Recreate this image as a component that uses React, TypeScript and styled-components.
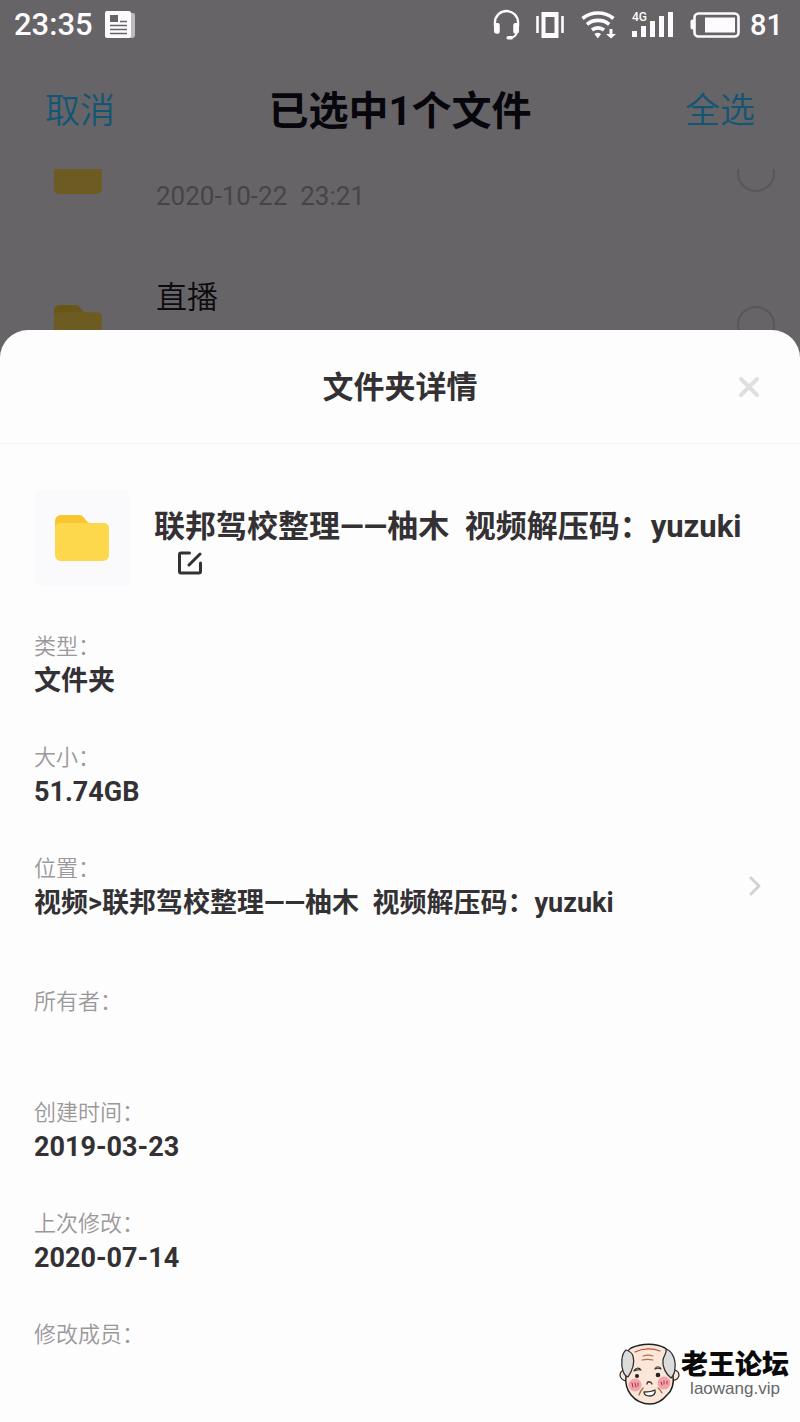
import React from "react";
import styled, { createGlobalStyle } from "styled-components";

const GlobalStyle = createGlobalStyle`
  *, *::before, *::after { box-sizing: border-box; }
  body {
    margin: 0;
    background: #676467;
    font-family: Roboto, "Noto Sans CJK SC", sans-serif;
  }
  h1, h2, h3, p, ul, dl, dd { margin: 0; padding: 0; }
  ul { list-style: none; }
  button { margin: 0; padding: 0; border: 0; background: none; font: inherit; color: inherit; cursor: pointer; }
  svg { display: block; flex: none; }
`;

const Page = styled.div`
  position: relative;
  display: flex;
  flex-direction: column;
  min-height: 100vh;
`;

const StatusBar = styled.div`
  display: flex;
  align-items: center;
  justify-content: space-between;
  height: 50px;
  padding: 0 17px 0 14px;
  color: #fdfbfd;
`;

const StatusGroup = styled.div<{ $gap: number }>`
  display: flex;
  align-items: center;
  gap: ${(p) => p.$gap}px;
`;

const StatusText = styled.span`
  font-size: 31px;
  font-weight: 500;
  line-height: 50px;
`;

const Battery = styled.div`
  display: flex;
  align-items: center;
  gap: 10px;
  font-size: 29px;
  font-weight: 500;
  line-height: 50px;
`;

const NavBar = styled.header`
  display: flex;
  align-items: center;
  justify-content: space-between;
  height: 119px;
  padding: 4px 45px 0;
`;

const NavTitle = styled.h1`
  font-size: 40px;
  font-weight: 700;
  line-height: 50px;
  color: #07060c;
`;

const NavButton = styled.button`
  font-size: 35px;
  font-weight: 350;
  line-height: 50px;
  color: #135674;
`;

const FileList = styled.ul`
  height: 161px;
  overflow: hidden;
`;

const FileRow = styled.li`
  display: flex;
  align-items: center;
  gap: 54px;
  height: 152px;
  padding: 0 25px 0 54px;

  &:first-child { margin-top: -72px; }
`;

const FileText = styled.label`
  flex: 1;
  padding-bottom: 4px;
`;

const FileName = styled.div`
  min-height: 50px;
  font-size: 31px;
  line-height: 50px;
  font-weight: 350;
  color: #0c0b0e;
`;

const FileDate = styled.div`
  min-height: 50px;
  font-size: 26px;
  line-height: 50px;
  white-space: pre-wrap;
  color: #464447;
`;

const RoundCheck = styled.input`
  appearance: none;
  width: 38px;
  height: 38px;
  margin: 0;
  border: 2px solid #595659;
  border-radius: 50%;
`;

const Sheet = styled.section`
  flex: 1;
  border-radius: 28px 28px 0 0;
  background: #fefdfe;
  color: #333133;
`;

const SheetHeader = styled.header`
  display: grid;
  grid-template-columns: 1fr auto 1fr;
  align-items: center;
  height: 114px;
  padding: 0 40px;
  border-bottom: 1px solid #f4f3f4;
`;

const SheetTitle = styled.h2`
  grid-column: 2;
  padding-top: 2px;
  font-size: 31px;
  font-weight: 700;
  line-height: 40px;
`;

const CloseButton = styled.button`
  justify-self: end;
`;

const SheetBody = styled.div`
  padding: 46px 34px 34px;
`;

const Summary = styled.div`
  display: flex;
  gap: 24px;
`;

const Thumb = styled.div`
  display: flex;
  align-items: center;
  justify-content: center;
  flex: none;
  width: 96px;
  height: 96px;
  border-radius: 8px;
  background: #faf9fb;
`;

const SummaryText = styled.div`
  padding-top: 18px;
`;

const FolderName = styled.h3`
  font-size: 31px;
  font-weight: 700;
  line-height: 37px;
  white-space: pre-wrap;
`;

const EditButton = styled.button`
  margin: 6px 0 0 24px;
`;

const Details = styled.dl`
  display: flex;
  flex-direction: column;
  gap: 43px;
  padding-top: 44px;
`;

const Detail = styled.div<{ $roomy?: boolean }>`
  display: flex;
  align-items: center;
  justify-content: space-between;
  padding-right: 4px;
  margin-bottom: ${(p) => (p.$roomy ? 22 : 0)}px;
`;

const Label = styled.dt`
  font-size: 22px;
  font-weight: 350;
  line-height: 34px;
  color: #9a989a;
`;

const Value = styled.dd`
  min-height: 34px;
  font-size: 27px;
  font-weight: 700;
  line-height: 34px;
  white-space: pre-wrap;
`;

const Watermark = styled.div`
  position: absolute;
  right: 11px;
  bottom: 17px;
  display: flex;
  align-items: center;
  gap: 1px;
  text-align: center;
`;

const WatermarkText = styled.div`
  padding-top: 2px;
`;

const WatermarkName = styled.div`
  font-size: 27px;
  font-weight: 900;
  line-height: 28px;
  color: #0a0a0a;
`;

const WatermarkSite = styled.div`
  font-family: "Liberation Sans", sans-serif;
  font-size: 17px;
  line-height: 20px;
  color: #666;
`;

const NewsIcon = () => (
  <svg width="30" height="28" viewBox="0 0 30 28" aria-hidden="true">
    <path d="M26 2h2a2 2 0 0 1 2 2v20a3 3 0 0 1-3 3h-2z" fill="#bcbabc" />
    <rect x="0" y="0" width="26" height="27" rx="2" fill="#fdfbfd" />
    <rect x="5" y="4" width="8" height="7" fill="#676467" />
    <path d="M15 10.500h7M5 14.500h17M5 18.500h17M5 22.500h17" stroke="#676467" strokeWidth="1.400" />
  </svg>
);

const HeadsetIcon = () => (
  <svg width="27" height="32" viewBox="0 0 28 32" fill="none" aria-hidden="true">
    <path d="M2 17v-3.500a12 12 0 0 1 24 0V17" stroke="#fdfbfd" strokeWidth="2.400" />
    <path d="M1 14h4a2 2 0 0 1 2 2v7a2 2 0 0 1-2 2H3.500A2.500 2.500 0 0 1 1 22.500zM27 14h-4a2 2 0 0 0-2 2v7a2 2 0 0 0 2 2h1.500a2.500 2.500 0 0 0 2.500-2.500z" fill="#fdfbfd" />
    <path d="M24.500 24c-.5 3-3 4.800-6 5" stroke="#fdfbfd" strokeWidth="2" />
    <rect x="14" y="27.500" width="7" height="3.500" rx="1.700" fill="#fdfbfd" />
  </svg>
);

const VibrateIcon = () => (
  <svg width="28" height="28" viewBox="0 0 28 28" aria-hidden="true">
    <path d="M1.500 5v17M26.500 5v17" stroke="#fdfbfd" strokeWidth="2.600" />
    <path d="M5.500 1h17v26h-17zM9.500 6v16h9V6z" fill="#fdfbfd" fillRule="evenodd" />
  </svg>
);

const WifiIcon = () => (
  <svg width="36" height="28" viewBox="0 0 36 28" fill="none" aria-hidden="true">
    <path d="M2.500 7.500c9-7.300 22-7.300 31 0M7 13.300c6.200-5.200 16-5.200 22.200 0M12 19c3.400-2.800 8.600-2.800 12 0" stroke="#fdfbfd" strokeWidth="3.600" />
    <path d="M14.500 23c2-1.700 4.500-1.700 6.500 0l-3.200 4.500z" fill="#fdfbfd" />
    <path d="M29.500 18h3v5h3.500l-5 4.500-5-4.500h3.500z" fill="#fdfbfd" />
  </svg>
);

const SignalIcon = () => (
  <svg width="42" height="28" viewBox="0 0 42 28" aria-hidden="true">
    <text x="0" y="10" fill="#fdfbfd" fontFamily="Roboto, sans-serif" fontSize="12" fontWeight="500">4G</text>
    <path d="M0 20h5v6H0zM9 15h5v11H9zM18 10h5v16h-5zM27 5h5v21h-5zM36 1h5v25h-5z" fill="#fdfbfd" />
  </svg>
);

const BatteryIcon = () => (
  <svg width="50" height="26" viewBox="0 0 50 26" aria-hidden="true">
    <rect x="4.500" y="1.500" width="44" height="23" rx="4" fill="none" stroke="#fdfbfd" strokeWidth="2.600" />
    <path d="M4 7.500H2.500A2 2 0 0 0 .5 9.500v6a2 2 0 0 0 2 2H4z" fill="#fdfbfd" />
    <rect x="15" y="5.500" width="30" height="15" fill="#fdfbfd" />
  </svg>
);

const FolderIcon = ({ width, height, back, front }: { width: number; height: number; back: string; front: string }) => (
  <svg width={width} height={height} viewBox="0 0 54 46" preserveAspectRatio="none" aria-hidden="true">
    <path d="M0 14V6a6 6 0 0 1 6-6h18c6 0 6 8 12 8v6z" fill={back} />
    <path d="M0 13a5 5 0 0 1 5-5h44a5 5 0 0 1 5 5v27a6 6 0 0 1-6 6H6a6 6 0 0 1-6-6z" fill={front} />
  </svg>
);

const CloseIcon = () => (
  <svg width="22" height="22" viewBox="0 0 22 22" aria-hidden="true">
    <path d="M3 3l16 16M19 3L3 19" stroke="#e0dfe0" strokeWidth="4" strokeLinecap="round" />
  </svg>
);

const EditIcon = () => (
  <svg width="24" height="24" viewBox="0 0 24 24" fill="none" stroke="#333133" strokeWidth="3" aria-hidden="true">
    <path d="M11.500 2H3a1.500 1.500 0 0 0-1.500 1.500v17A1.500 1.500 0 0 0 3 22h18a1.500 1.500 0 0 0 1.500-1.500V12" strokeLinecap="round" />
    <path d="M11 14L22 3" strokeLinecap="round" />
  </svg>
);

const ChevronIcon = () => (
  <svg width="14" height="22" viewBox="0 0 14 22" fill="none" aria-hidden="true">
    <path d="M3 3l8 8-8 8" stroke="#d3d2d3" strokeWidth="3" strokeLinecap="round" strokeLinejoin="round" />
  </svg>
);

const OldManIcon = () => (
  <svg width="62" height="62" viewBox="0 0 62 62" fill="none" aria-hidden="true" strokeLinecap="round" strokeLinejoin="round">
    <path d="M9 28c-3-2-7 0-7 4 0 3 3 6 7 6zM54 28c3-2 7 0 7 4 0 3-3 6-7 5z" fill="#fbe6d8" stroke="#333" strokeWidth="1.300" />
    <path d="M8 32C6 20 7 9 13 5 24 0 38 0 47 5c7 5 9 15 8 27 1 8 0 15-6 20-5 6-11 9-17 9-7 0-14-3-19-9-4-5-6-12-5-20z" fill="#fbe6d8" stroke="#222" strokeWidth="1.500" />
    <path d="M8 7C3 11 3 22 5 28c1 3 2 5 5 6 4-6 7-14 5-21-1-4-4-5-7-6zM48 6c6 2 10 10 9 19 0 5-2 8-4 10-5-4-9-11-8-18 1-5 4-7 3-11z" fill="#dcdcdc" stroke="#333" strokeWidth="1.300" />
    <path d="M17 9c8-4 18-4 25-1" stroke="#b5563f" strokeWidth="1.200" />
    <path d="M25 13c3-1 7-1 10 0M24 17c4-1 7-1 11 0" stroke="#a8754e" strokeWidth="1.200" />
    <circle cx="17" cy="42" r="6.500" fill="#f5a2ab" />
    <circle cx="46" cy="40" r="6.500" fill="#f5a2ab" />
    <path d="M14 40l1 4M17 40l1 4M20 40v3M43 39l1 3M46 38v3M49 38v3" stroke="#9c3944" strokeWidth="1" />
    <path d="M16 28c1-3 5-4 7-1-3-1-4 0-7 1zM37 26c1-3 5-3 6 0-2-1-4-1-6 0z" fill="#fff" stroke="#333" strokeWidth="1.200" />
    <circle cx="19" cy="33" r="2" fill="#222" />
    <circle cx="40" cy="32" r="2.300" fill="#222" />
    <path d="M29 41c0-3 4-3 5 0" stroke="#333" strokeWidth="1.300" />
    <path d="M25 45c-2 2-3 4-4 7M40 45c2 1 3 3 4 5" stroke="#9b6b4b" strokeWidth="1.300" />
    <path d="M26 49c4 0 7 0 11-2 1 4-2 6-5 6s-6-1-6-4z" fill="#fff" stroke="#333" strokeWidth="1.300" />
  </svg>
);

const files = [
  { id: "file-a", name: "", date: "2020-10-22  23:21" },
  { id: "file-b", name: "直播", date: "" },
];

const details = [
  { label: "类型：", value: "文件夹" },
  { label: "大小：", value: "51.74GB" },
  { label: "位置：", value: "视频>联邦驾校整理——柚木  视频解压码：yuzuki", link: true },
  { label: "所有者：", value: "" },
  { label: "创建时间：", value: "2019-03-23" },
  { label: "上次修改：", value: "2020-07-14" },
  { label: "修改成员：", value: "" },
];

export default function App() {
  return (
    <Page>
      <GlobalStyle />
      <StatusBar>
        <StatusGroup $gap={12}>
          <StatusText>23:35</StatusText>
          <NewsIcon />
        </StatusGroup>
        <StatusGroup $gap={16}>
          <HeadsetIcon />
          <VibrateIcon />
          <WifiIcon />
          <SignalIcon />
          <Battery>
            <BatteryIcon />
            <span>81</span>
          </Battery>
        </StatusGroup>
      </StatusBar>

      <NavBar>
        <NavButton type="button">取消</NavButton>
        <NavTitle>已选中1个文件</NavTitle>
        <NavButton type="button">全选</NavButton>
      </NavBar>

      <FileList>
        {files.map((f) => (
          <FileRow key={f.id}>
            <FolderIcon width={48} height={41} back="#6a5617" front="#6c5c22" />
            <FileText htmlFor={f.id}>
              <FileName>{f.name}</FileName>
              <FileDate>{f.date}</FileDate>
            </FileText>
            <RoundCheck type="checkbox" id={f.id} />
          </FileRow>
        ))}
      </FileList>

      <Sheet>
        <SheetHeader>
          <SheetTitle>文件夹详情</SheetTitle>
          <CloseButton type="button" aria-label="关闭">
            <CloseIcon />
          </CloseButton>
        </SheetHeader>
        <SheetBody>
          <Summary>
            <Thumb>
              <FolderIcon width={54} height={46} back="#f9c62f" front="#fdd74c" />
            </Thumb>
            <SummaryText>
              <FolderName>联邦驾校整理——柚木  视频解压码：yuzuki</FolderName>
              <EditButton type="button" aria-label="重命名">
                <EditIcon />
              </EditButton>
            </SummaryText>
          </Summary>
          <Details>
            {details.map((d) => (
              <Detail key={d.label} $roomy={d.link}>
                <div>
                  <Label>{d.label}</Label>
                  <Value>{d.value}</Value>
                </div>
                {d.link && (
                  <button type="button" aria-label="打开位置">
                    <ChevronIcon />
                  </button>
                )}
              </Detail>
            ))}
          </Details>
        </SheetBody>
      </Sheet>

      <Watermark>
        <OldManIcon />
        <WatermarkText>
          <WatermarkName>老王论坛</WatermarkName>
          <WatermarkSite>laowang.vip</WatermarkSite>
        </WatermarkText>
      </Watermark>
    </Page>
  );
}
